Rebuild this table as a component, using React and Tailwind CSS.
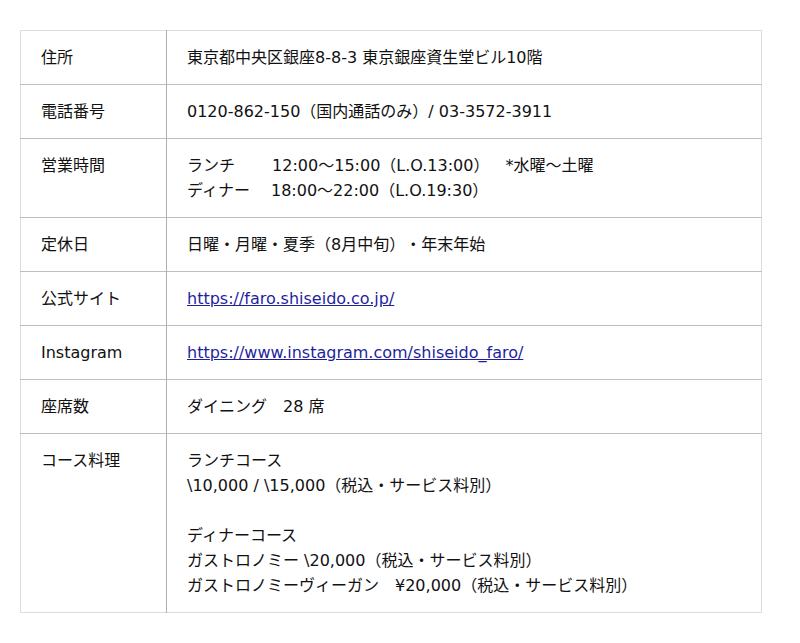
import React from "react";

const rows = [
  { label: "住所", lines: ["東京都中央区銀座8-8-3 東京銀座資生堂ビル10階"] },
  { label: "電話番号", lines: ["0120-862-150（国内通話のみ）/ 03-3572-3911"] },
  {
    label: "営業時間",
    lines: [
      "ランチ\u3000\u3000 12:00～15:00（L.O.13:00）\u3000*水曜～土曜",
      "ディナー\u3000 18:00～22:00（L.O.19:30）",
    ],
  },
  { label: "定休日", lines: ["日曜・月曜・夏季（8月中旬）・年末年始"] },
  { label: "公式サイト", link: "https://faro.shiseido.co.jp/" },
  { label: "Instagram", link: "https://www.instagram.com/shiseido_faro/" },
  { label: "座席数", lines: ["ダイニング\u300028 席"] },
  {
    label: "コース料理",
    lines: [
      "ランチコース",
      "\\10,000 / \\15,000（税込・サービス料別）",
      "",
      "ディナーコース",
      "ガストロノミー \\20,000（税込・サービス料別）",
      "ガストロノミーヴィーガン\u3000¥20,000（税込・サービス料別）",
    ],
  },
];

export default function App() {
  return (
    <div
      className="min-h-screen bg-white pt-[30px] pl-[20px] text-[16px] leading-[25px] text-[#111] [text-spacing-trim:space-all]"
      style={{ fontFamily: '"DejaVu Sans", "Noto Sans CJK JP", sans-serif' }}
    >
      <table className="w-[742px] border-collapse border border-[#dcdcdc]">
        <tbody>
          {rows.map((row, i) => (
            <tr key={i} className={i > 0 ? "border-t border-[#bdbdbd]" : ""}>
              <td className="w-[146px] align-top px-[20px] pt-[14px] pb-[14px] border-r border-[#b0b0b0]">
                {row.label}
              </td>
              <td className="align-top px-[20px] pt-[14px] pb-[14px] whitespace-pre">
                {row.link ? (
                  <a href={row.link} className="text-[#1f1f9e] underline">
                    {row.link}
                  </a>
                ) : (
                  row.lines.map((line, j) => (
                    <div key={j} className="h-[25px]">
                      {line}
                    </div>
                  ))
                )}
              </td>
            </tr>
          ))}
        </tbody>
      </table>
    </div>
  );
}
